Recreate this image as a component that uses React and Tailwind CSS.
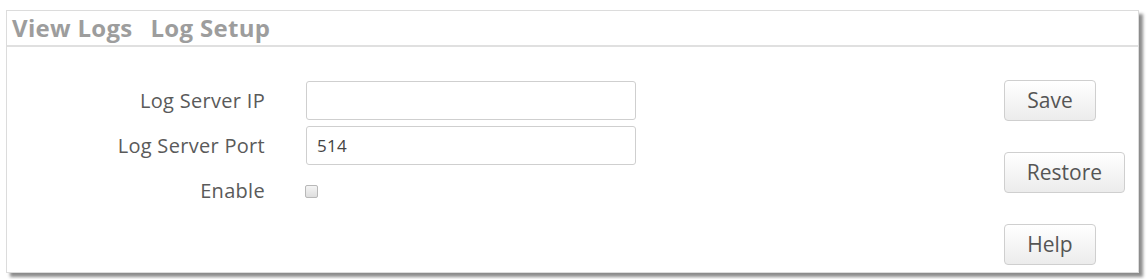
export default function App() {
  const font = { fontFamily: '"Open Sans", "Noto Sans", sans-serif' };
  return (
    <div className="w-[1148px] h-[279px] bg-white pt-[10px] pl-[6px]" style={font}>
      <div className="w-[1133px] h-[263px] bg-white border border-[#dcdcdc] shadow-[4px_4px_3px_rgba(0,0,0,0.45)] flex flex-col">
        <div className="h-[36px] border-b-2 border-[#e0e0e0] flex items-center pl-[5px] gap-[18px] text-[24px] font-bold text-[#9d9d9d] tracking-[0.3px]">
          <span>View Logs</span>
          <span>Log Setup</span>
        </div>
        <div className="flex flex-1">
          <div className="flex-1 pt-[34px] flex flex-col gap-[6px] text-[20px] text-[#5a5a5a] tracking-[0.3px]">
            <div className="flex items-center h-[39px]">
              <label className="w-[258px] text-right">Log Server IP</label>
              <input className="ml-[41px] w-[330px] h-[39px] border border-[#cfcfcf] rounded-[3px] bg-white px-2 outline-none" />
            </div>
            <div className="flex items-center h-[39px]">
              <label className="w-[258px] text-right">Log Server Port</label>
              <input defaultValue="514" className="ml-[41px] w-[330px] h-[39px] border border-[#cfcfcf] rounded-[3px] bg-white px-[10px] text-[17px] text-[#444] outline-none" />
            </div>
            <div className="flex items-center h-[40px]">
              <label className="w-[258px] text-right">Enable</label>
              <span className="ml-[40px] w-[13px] h-[13px] border border-[#b8b8b8] rounded-[2px] bg-gradient-to-b from-[#f4f4f4] to-[#dedede]" />
            </div>
          </div>
          <div className="w-[134px] pt-[33px] flex flex-col items-start gap-[31px] text-[21px] text-[#555]">
            <button className="w-[92px] h-[41px] border border-[#cfcfcf] rounded-[4px] bg-gradient-to-b from-white to-[#ececec]">Save</button>
            <button className="w-[121px] h-[41px] border border-[#cfcfcf] rounded-[4px] bg-gradient-to-b from-white to-[#ececec]">Restore</button>
            <button className="w-[92px] h-[41px] border border-[#cfcfcf] rounded-[4px] bg-gradient-to-b from-white to-[#ececec]">Help</button>
          </div>
        </div>
      </div>
    </div>
  );
}
